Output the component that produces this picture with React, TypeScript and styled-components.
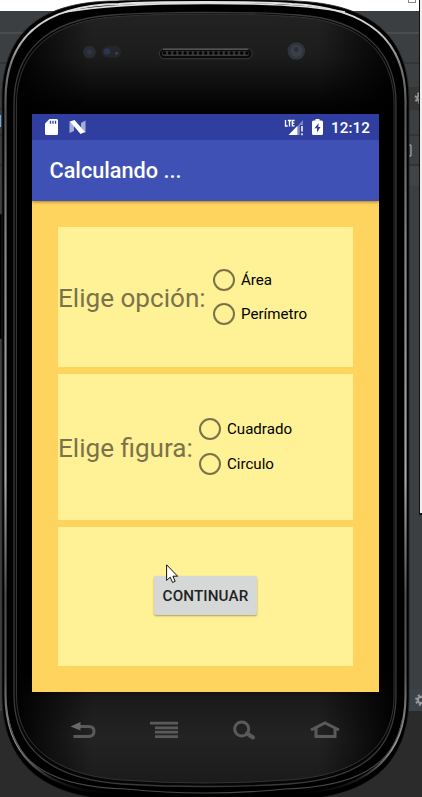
import React from 'react';
import styled, { createGlobalStyle } from 'styled-components';

const GlobalStyle = createGlobalStyle`
  * { box-sizing: border-box; }
  body { margin: 0; background: #2b2b2b; overflow: hidden; }
`;

const Desktop = styled.main`
  position: relative;
  width: 422px;
  height: 797px;
  overflow: hidden;
  font-family: Roboto, sans-serif;
`;

const Backdrop = styled.svg`
  position: absolute;
  inset: 0;
  display: block;
`;

const Phone = styled.div`
  position: relative;
  width: 410px;
  height: 797px;
  padding-left: 32px;
  display: flex;
  flex-direction: column;
`;

const Earpiece = styled.div`
  height: 114px;
`;

const Screen = styled.section`
  width: 347px;
  height: 578px;
  display: flex;
  flex-direction: column;
  background: #ffd45e;
`;

const StatusBar = styled.header`
  height: 26px;
  flex: none;
  background: #303f9f;
  display: flex;
  align-items: center;
  padding: 0 9px 0 13px;
`;

const StatusIcon = styled.svg<{ $gap?: number }>`
  display: block;
  margin-right: ${(p) => p.$gap ?? 0}px;
`;

const Spacer = styled.div`
  flex: 1;
`;

const Clock = styled.span`
  color: #fff;
  font-size: 15.2px;
  font-weight: 500;
  line-height: 26px;
  padding-top: 2px;
  letter-spacing: 0.1px;
`;

const AppBar = styled.div`
  height: 61px;
  flex: none;
  background: #3f51b5;
  box-shadow: 0 1px 3px rgba(90, 60, 0, 0.55);
  clip-path: inset(0 0 -6px 0);
  display: flex;
  align-items: center;
  padding-left: 17.5px;
`;

const Title = styled.h1`
  margin: 0;
  color: #fff;
  font-size: 21.7px;
  font-weight: 500;
  line-height: 28px;
`;

const Body = styled.div`
  flex: 1;
  padding: 26px;
  display: grid;
  grid-template-rows: 140px 146.5px 139px;
  row-gap: 6.5px;
`;

const Card = styled.div<{ $center?: boolean }>`
  background: #fff196;
  display: flex;
  align-items: center;
  justify-content: ${(p) => (p.$center ? 'center' : 'flex-start')};
`;

const Question = styled.h2<{ $width: number; $drop: number }>`
  margin: ${(p) => p.$drop}px 0 0;
  width: ${(p) => p.$width}px;
  color: #7a734a;
  font-size: 26.1px;
  font-weight: 400;
  line-height: 32px;
  white-space: nowrap;
`;

const Options = styled.div`
  display: flex;
  flex-direction: column;
`;

const Option = styled.label`
  height: 34.7px;
  display: flex;
  align-items: center;
  gap: 6px;
  color: #000;
  font-size: 15.1px;
  line-height: 20px;
`;

const Radio = styled.input`
  appearance: none;
  width: 22px;
  height: 22px;
  margin: 0;
  border: 2px solid #7a734a;
  border-radius: 50%;
  background: transparent;
`;

const Button = styled.button`
  width: 103.5px;
  height: 39px;
  margin-bottom: 1px;
  border: 0;
  padding: 1px 0 0;
  border-radius: 2px;
  background: #d6d7d7;
  color: #212222;
  font: 500 15.2px/20px Roboto, sans-serif;
  letter-spacing: 0.12px;
  white-space: nowrap;
  box-shadow: 0 1px 2px rgba(70, 60, 0, 0.45);
`;

const NavKeys = styled.nav`
  height: 105px;
  width: 347px;
  padding: 26px 38px 0 37px;
  display: flex;
  justify-content: space-between;
`;

const NavIcon = styled.svg`
  display: block;
  width: 32px;
  height: 24px;
  fill: none;
  stroke: #5a5a5a;
  stroke-width: 3;
`;

const Pointer = styled.svg`
  position: absolute;
  left: 166px;
  top: 563.5px;
`;

const OUTER =
  'M2 100 C2 40 32 1 117 1 C145 -1 266 -1 295 1 C378 4 409 42 409 100 L409 698 C409 764 369 800 285 800 L126 800 C42 800 2 762 2 696 Z';
const RIM =
  'M5.5 100 C5.5 44 36 5 119 4 C151 1.5 260 1.5 292 4 C373 8 405.5 45 405.5 100 L405.5 696 C405.5 758 365 794 285 794 L126 794 C46 794 5.5 757 5.5 694 Z';
const LINE =
  'M14 104 C14 54 44 20 112 15 C160 11.5 252 11.5 298 15 C367 20 396 54 396 104 L396 695 C396 751 361 779 288 784 Q205 789 122 784 C51 779 14 749 14 695 Z';
const FACE =
  'M16.5 104 C16.5 57 46 22 113 17 C160 13 252 13 298 17 C365 22 394 57 394 104 L394 695 C394 747 359 775 288 780 Q205 786 122 780 C54 775 16.5 745 16.5 695 Z';

const SETTINGS_LINES = [33, 63, 109, 135, 165];
const GRILLE = Array.from({ length: 17 }, (_, i) => 164.5 + i * 5.15);

function Gear({ x, y }: { x: number; y: number }) {
  return (
    <g transform={`translate(${x} ${y})`}>
      <circle r="3.2" fill="none" stroke="#999" strokeWidth="2.2" />
      <circle r="5" fill="none" stroke="#999" strokeWidth="1.8" strokeDasharray="2 1.93" />
    </g>
  );
}

function Hardware() {
  return (
    <Backdrop width="422" height="797" viewBox="0 0 422 797" aria-hidden="true">
      <defs>
        <linearGradient id="face" x1="0" y1="0" x2="0" y2="1">
          <stop offset="0" stopColor="#222" />
          <stop offset="0.055" stopColor="#1c1c1c" />
          <stop offset="0.12" stopColor="#030303" />
          <stop offset="0.15" stopColor="#000" />
          <stop offset="0.85" stopColor="#000" />
          <stop offset="0.89" stopColor="#1a1a1a" />
          <stop offset="0.94" stopColor="#232323" />
          <stop offset="1" stopColor="#1b1b1b" />
        </linearGradient>
        <linearGradient id="sides" x1="0" y1="0" x2="1" y2="0">
          <stop offset="0" stopColor="#000" stopOpacity="0.95" />
          <stop offset="0.2" stopColor="#000" stopOpacity="0" />
          <stop offset="0.8" stopColor="#000" stopOpacity="0" />
          <stop offset="1" stopColor="#000" stopOpacity="0.95" />
        </linearGradient>
        <linearGradient id="rim" x1="0" y1="0" x2="0" y2="1">
          <stop offset="0" stopColor="#e2e2e2" />
          <stop offset="0.035" stopColor="#ccc" />
          <stop offset="0.08" stopColor="#777" />
          <stop offset="0.14" stopColor="#555" />
          <stop offset="0.3" stopColor="#858585" />
          <stop offset="0.6" stopColor="#aaa" />
          <stop offset="0.75" stopColor="#4c4c4c" />
          <stop offset="0.85" stopColor="#555" />
          <stop offset="0.94" stopColor="#999" />
          <stop offset="0.98" stopColor="#222" />
          <stop offset="1" stopColor="#000" />
        </linearGradient>
      </defs>
      <rect width="422" height="797" fill="#2b2b2b" />
      <rect y="11" width="422" height="700" fill="#3c3f41" />
      <rect width="422" height="11" fill="#fff" />
      {SETTINGS_LINES.map((y) => (
        <rect key={y} y={y - 0.5} width="419" height="1" fill={y === 33 ? '#5a5b58' : '#292b2c'} />
      ))}
      <rect x="407" y="87" width="12" height="22" fill="#363636" />
      <rect x="407" y="166" width="12" height="20" fill="#414446" />
      <rect x="408" y="689" width="14" height="22" fill="#3d434b" />
      <rect x="408.5" y="-3" width="7" height="5.5" fill="none" stroke="#888" />
      <path d="M409 145h2v11h-2" stroke="#bbb" fill="none" />
      <Gear x={420.5} y={98} />
      <Gear x={421} y={700} />
      <path d="M419 0h3v515h-3z" fill="#111" />
      <path d="M420 0h2v513h-2z" fill="#f0f0f0" />
      <rect y="115" width="1.2" height="12" fill="#6cacd5" />
      <rect y="214" width="5" height="125" rx="1" fill="#000" />
      <rect x="406" y="145" width="3" height="66" fill="#000" />
      <path d={OUTER} fill="#000" stroke="#252525" strokeWidth="0.8" />
      <path d={RIM} fill="none" stroke="url(#rim)" strokeWidth="2.2" />
      <path d="M65 12 C125 1 285 0 345 12" fill="none" stroke="#dedede" strokeWidth="1.6" />
      <path d="M9 720 C17 766 55 787 126 789 Q205 797 285 789 C355 787 394 766 402 720" fill="none" stroke="#484848" strokeWidth="1.1" />
      <path d={LINE} fill="#060606" stroke="#3a3a3a" strokeWidth="1.3" />
      <path d={FACE} fill="url(#face)" />
      <path d={FACE} fill="url(#sides)" stroke="#333" strokeWidth="1" />
      <circle cx="89.5" cy="52" r="6.3" fill="#2b2c31" />
      <circle cx="89.5" cy="52" r="2.5" fill="#30364a" />
      <rect x="102" y="46" width="19" height="11.5" rx="5.5" fill="#25262a" />
      <circle cx="107" cy="51.5" r="3.3" fill="#2c3550" />
      <circle cx="116.5" cy="53.3" r="1.4" fill="#39445e" />
      <rect x="159.5" y="48.7" width="92.5" height="10" rx="4.5" fill="#0a0a0a" stroke="#3c3c3c" />
      <path d="M163 49.3h85" stroke="#686868" />
      <rect x="162" y="51" width="87" height="5" rx="2" fill="#393939" />
      {GRILLE.map((x) => (
        <circle key={x} cx={x} cy="53" r="1.8" fill="#030303" />
      ))}
      <circle cx="296.3" cy="51" r="8.8" fill="#30353c" />
      <circle cx="296.3" cy="51" r="6" fill="#39404a" />
      <circle cx="296.3" cy="49.5" r="2.4" fill="#2a3038" />
    </Backdrop>
  );
}

function Choice({ label, group }: { label: string; group: string }) {
  return (
    <Option>
      <Radio type="radio" name={group} />
      {label}
    </Option>
  );
}

export default function App() {
  return (
    <Desktop>
      <GlobalStyle />
      <Hardware />
      <Phone>
        <Earpiece />
        <Screen>
          <StatusBar>
            <StatusIcon width="13" height="16" viewBox="0 0 13 16" $gap={11}>
              <path d="M4.5 0H11.5Q13 0 13 1.5V14.5Q13 16 11.5 16H1.5Q0 16 0 14.5V4.5Z" fill="#fff" />
              <path d="M5.5 1.8v3M8 1.8v3M10.5 1.8v3" stroke="#303f9f" strokeWidth="1.3" />
            </StatusIcon>
            <StatusIcon width="17" height="14" viewBox="0 0 17 14">
              <path d="M0.5 1 5 4v7L0.5 13ZM12 3l4.5-2.5V13L12 10Z" fill="#a5add9" />
              <path d="M1 1.5 5.5 0 16 12 11.5 14Z" fill="#fff" />
            </StatusIcon>
            <Spacer />
            <StatusIcon width="20" height="17" viewBox="0 0 20 17" $gap={8}>
              <path d="M19 1V16H5.5Z" fill="#7c87c5" />
              <path d="M13.3 7V16H4.5Z" fill="#fff" />
              <path d="M15.8 6h4v11h-4z" fill="#303f9f" />
              <path d="M18 7v5.5M18 14.3v2" stroke="#fff" strokeWidth="1.5" />
              <path d="M1.5 1v6h2.2M3.8 1.5h3.4M5.5 1.5v6M10.6 1.5H8.3v5.3h2.3M8.3 4.2h2" stroke="#fff" strokeWidth="1.3" fill="none" />
            </StatusIcon>
            <StatusIcon width="11" height="16" viewBox="0 0 11 16" $gap={8}>
              <path d="M3.5 0h4v1.5H9.5Q11 1.5 11 3v11.5Q11 16 9.5 16h-8Q0 16 0 14.5V3Q0 1.5 1.5 1.5h2Z" fill="#fff" />
              <path d="M6.7 4 2.5 9.3H5V13.5L8.5 8H6.3Z" fill="#303f9f" />
            </StatusIcon>
            <Clock>12:12</Clock>
          </StatusBar>
          <AppBar>
            <Title>Calculando ...</Title>
          </AppBar>
          <Body>
            <Card>
              <Question $width={155} $drop={1}>Elige opción:</Question>
              <Options>
                <Choice group="opcion" label="Área" />
                <Choice group="opcion" label="Perímetro" />
              </Options>
            </Card>
            <Card>
              <Question $width={141} $drop={3}>Elige figura:</Question>
              <Options>
                <Choice group="figura" label="Cuadrado" />
                <Choice group="figura" label="Circulo" />
              </Options>
            </Card>
            <Card $center>
              <Button>CONTINUAR</Button>
            </Card>
          </Body>
        </Screen>
        <NavKeys>
          <NavIcon viewBox="0 0 32 24">
            <path d="M9 8.5H19.5Q25 8.5 25 13Q25 18.5 19.5 18.5H4.5" />
            <path d="M1.5 8.5 11.5 4V12.5Z" fill="#686868" stroke="none" />
          </NavIcon>
          <NavIcon viewBox="0 0 32 24">
            <path d="M1 5.2H29M6 9.8H29M6 14.2H29M6 18.6H29" strokeWidth="2.8" />
          </NavIcon>
          <NavIcon viewBox="0 0 32 24">
            <circle cx="12.7" cy="11" r="7" />
            <path d="M18 15.5 24 19.5" strokeWidth="4" strokeLinecap="round" />
          </NavIcon>
          <NavIcon viewBox="0 0 32 24">
            <path d="M2 12 16 5 30 12M7 10.5V18.5H26V10.5" />
          </NavIcon>
        </NavKeys>
      </Phone>
      <Pointer width="13" height="20" viewBox="0 0 13 20" aria-hidden="true">
        <path d="M0.6 0.8V16.4L4.2 13.2 6.6 18.5 9.2 17.3 6.9 12.2H11.6Z" fill="#fff" stroke="#111" strokeWidth="1" />
      </Pointer>
    </Desktop>
  );
}
